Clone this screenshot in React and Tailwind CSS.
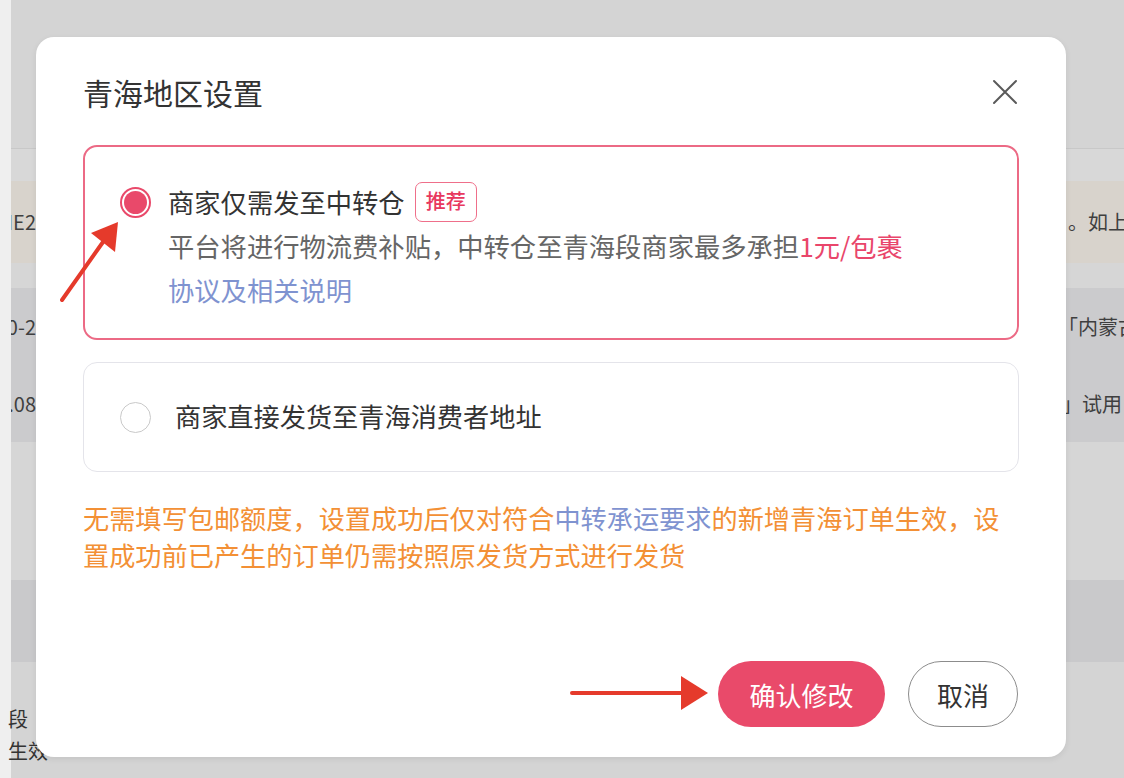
import React, { useState } from 'react';

const cjk = { fontFamily: '"Noto Sans CJK SC", "Noto Sans", sans-serif' };

// one table row of the page behind the mask: a clipped cell at each side of the dialog
function BackRow({ left, right, rightClass = 'pl-[2px]', className = '' }) {
  return (
    <div className={`grid grid-cols-[25px_1030px_58px] items-center text-[20px] text-[#3f3f3f] ${className}`}>
      <div className="flex justify-end overflow-hidden whitespace-nowrap">
        <span className="shrink-0">{left}</span>
      </div>
      <div />
      <div className={`whitespace-nowrap ${rightClass}`}>{right}</div>
    </div>
  );
}

function Radio({ checked }) {
  if (checked) {
    return (
      <div className="w-[31px] h-[31px] shrink-0 rounded-full border-2 border-[#e9496a] bg-white p-[2px]">
        <div className="w-full h-full rounded-full bg-[#e9496a]" />
      </div>
    );
  }
  return <div className="w-[31px] h-[31px] shrink-0 rounded-full border-[1.5px] border-[#c9c9c9] bg-white" />;
}

function App() {
  const [mode, setMode] = useState('transfer');

  return (
    <div className="relative w-[1124px] h-[778px] overflow-hidden flex bg-[#d4d4d4]" style={cjk}>
      <div className="w-[11px] shrink-0 bg-[#efefef]" />

      <div className="flex-1 flex flex-col">
        <div className="h-[149px] shrink-0 bg-[#d4d4d4] border-b border-[#c8c8c8]" />
        <div className="h-[32px] shrink-0 bg-[#d8d8d8]" />
        <BackRow className="h-[82px] shrink-0 bg-[#d8d3cc]" left="IE2" right="。如上所述" />
        <div className="h-[25px] shrink-0 bg-[#d6d6d6]" />
        <div className="h-[154px] shrink-0 flex flex-col bg-[#cbcbcd]">
          <BackRow className="flex-1" left="10-2" right="「内蒙古」" rightClass="-ml-[8px]" />
          <BackRow className="flex-1" left=".08" right="」试用" rightClass="-ml-[4px]" />
        </div>
        <div className="h-[138px] shrink-0 bg-[#d6d6d6]" />
        <div className="h-[82px] shrink-0 bg-[#c9c9cb]" />
        <div className="flex-1 flex flex-col justify-end pb-[11px] bg-[#d4d4d4] text-[20px] leading-[32px] text-[#333]">
          <div className="-ml-[3px]">段</div>
          <div className="-ml-[3px]">生效</div>
        </div>
      </div>

      {/* modal */}
      <div className="absolute left-[36px] top-[37px] w-[1030px] h-[720px] rounded-[18px] bg-white flex flex-col px-[47px] pt-[35px] pb-[30px] shadow-[0_2px_6px_rgba(0,0,0,0.08)]">
        <div className="flex items-center justify-between h-[40px]">
          <h2 className="text-[30px] leading-[40px] text-[#333]">青海地区设置</h2>
          <button className="w-[26px] h-[26px] mr-[1px] flex items-center justify-center">
            <svg width="26" height="26" viewBox="0 0 26 26" fill="none">
              <path d="M2 2L24 24M24 2L2 24" stroke="#5a5a5a" strokeWidth="2" strokeLinecap="round" />
            </svg>
          </button>
        </div>

        <div
          onClick={() => setMode('transfer')}
          className={`mt-[33px] h-[195px] rounded-[14px] border-2 pl-[35px] pr-[30px] pt-[33px] flex gap-[17px] cursor-pointer ${mode === 'transfer' ? 'border-[#ec6a85]' : 'border-[#e6e6ec]'}`}
        >
          <div className="h-[44px] flex items-center">
            <Radio checked={mode === 'transfer'} />
          </div>
          <div className="text-[26.3px] leading-[44px]">
            <div className="flex items-center text-[#333]">
              商家仅需发至中转仓
              <span className="ml-[10px] h-[40px] px-[10px] rounded-[7px] border-[1.5px] border-[#ef6f8a] text-[#e8385e] text-[20px] leading-[36px] font-medium">
                推荐
              </span>
            </div>
            <div className="text-[#666]">
              平台将进行物流费补贴，中转仓至青海段商家最多承担<span className="text-[#e9466b]">1元/包裹</span>
            </div>
            <div className="text-[#7f93d0]">协议及相关说明</div>
          </div>
        </div>

        <div
          onClick={() => setMode('direct')}
          className={`mt-[22px] h-[110px] rounded-[14px] border pl-[36px] flex items-center gap-[24px] cursor-pointer ${mode === 'direct' ? 'border-[#ec6a85]' : 'border-[#e4e4ea]'}`}
        >
          <Radio checked={mode === 'direct'} />
          <span className="text-[26.2px] text-[#333]">商家直接发货至青海消费者地址</span>
        </div>

        <p className="mt-[28px] text-[26.2px] leading-[37px] text-[#f39035]">
          无需填写包邮额度，设置成功后仅对符合<span className="text-[#7f93d0]">中转承运要求</span>的新增青海订单生效，设置成功前已产生的订单仍需按照原发货方式进行发货
        </p>

        <div className="mt-auto flex justify-end gap-[23px] pr-[1px]">
          <button className="w-[167px] h-[66px] rounded-full bg-[#e94a6a] text-white text-[26px]">确认修改</button>
          <button className="w-[110px] h-[66px] rounded-full border border-[#8c8c8c] bg-white text-[#333] text-[26px]">取消</button>
        </div>
      </div>

      {/* red pointers */}
      <svg className="absolute inset-0 pointer-events-none" width="1124" height="778" viewBox="0 0 1124 778">
        <path d="M62 300L103 242" stroke="#e53a2b" strokeWidth="4" strokeLinecap="round" />
        <path d="M118 222L91 233L115 252Z" fill="#e53a2b" />
        <path d="M572 693L685 693" stroke="#e53a2b" strokeWidth="4" strokeLinecap="round" />
        <path d="M708 693L681 676L681 710Z" fill="#e53a2b" />
      </svg>
    </div>
  );
}

export default App;
